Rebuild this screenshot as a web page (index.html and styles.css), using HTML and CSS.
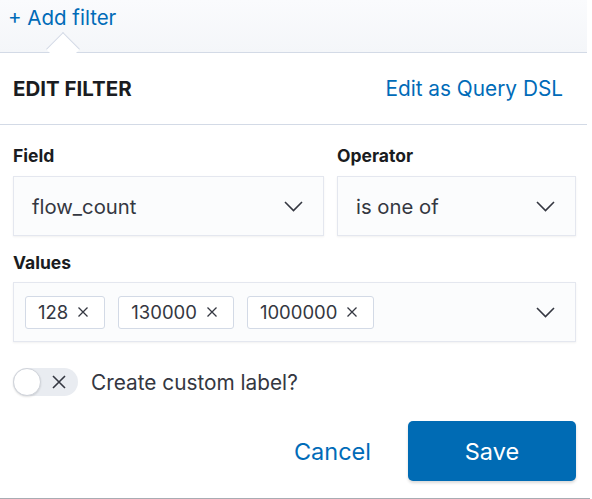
FILE: index.html
```html
<!DOCTYPE html>
<html>
<head>
<meta charset="utf-8">
<link rel="stylesheet" href="styles.css">
</head>
<body>
<div class="page">
  <div class="topbar">
    <a class="add-filter">+ Add filter</a>
    <span class="notch"></span>
  </div>
  <div class="panel">
    <div class="panel-head">
      <h2 class="title">EDIT FILTER</h2>
      <a class="link">Edit as Query DSL</a>
    </div>
    <div class="form">
      <div class="row">
        <div class="field">
          <label class="label">Field</label>
          <div class="select">
            <span>flow_count</span>
            <svg class="chev" width="19" height="11" viewBox="0 0 19 11"><path d="M1 1 L9.5 9.5 L18 1" fill="none" stroke="#343741" stroke-width="1.6"/></svg>
          </div>
        </div>
        <div class="field op">
          <label class="label">Operator</label>
          <div class="select">
            <span>is one of</span>
            <svg class="chev" width="19" height="11" viewBox="0 0 19 11"><path d="M1 1 L9.5 9.5 L18 1" fill="none" stroke="#343741" stroke-width="1.6"/></svg>
          </div>
        </div>
      </div>
      <label class="label values-label">Values</label>
      <div class="combo">
        <div class="chips">
          <span class="chip">128<svg width="12" height="12" viewBox="0 0 12 12"><path d="M1.5 1.5 L10.5 10.5 M10.5 1.5 L1.5 10.5" stroke="#343741" stroke-width="1.3"/></svg></span>
          <span class="chip">130000<svg width="12" height="12" viewBox="0 0 12 12"><path d="M1.5 1.5 L10.5 10.5 M10.5 1.5 L1.5 10.5" stroke="#343741" stroke-width="1.3"/></svg></span>
          <span class="chip">1000000<svg width="12" height="12" viewBox="0 0 12 12"><path d="M1.5 1.5 L10.5 10.5 M10.5 1.5 L1.5 10.5" stroke="#343741" stroke-width="1.3"/></svg></span>
        </div>
        <svg class="chev" width="19" height="11" viewBox="0 0 19 11"><path d="M1 1 L9.5 9.5 L18 1" fill="none" stroke="#343741" stroke-width="1.6"/></svg>
      </div>
      <div class="toggle-row">
        <span class="switch">
          <span class="knob"></span>
          <svg class="switch-x" width="16" height="16" viewBox="0 0 16 16"><path d="M2 2 L14 14 M14 2 L2 14" stroke="#343741" stroke-width="1.6"/></svg>
        </span>
        <span class="toggle-label">Create custom label?</span>
      </div>
      <div class="actions">
        <a class="cancel">Cancel</a>
        <button class="save">Save</button>
      </div>
    </div>
  </div>
  <div class="bottom-line"></div>
</div>
</body>
</html>
```

FILE: styles.css
```css
* { box-sizing: border-box; }
html, body { margin: 0; padding: 0; background: #fff; }
body {
  font-family: Inter, "Noto Sans", sans-serif;
  color: #343741;
  width: 592px;
  height: 499px;
  overflow: hidden;
}
.page { width: 590px; }
.topbar {
  position: relative;
  width: 587px;
  height: 53px;
  background: linear-gradient(#fafbfd, #f4f6f9);
  border-bottom: 1px solid #d3dae6;
  padding: 5px 0 0 8px;
}
.add-filter {
  font-size: 20.5px;
  line-height: 26px;
  color: #006bb8;
}
.notch {
  position: absolute;
  left: 51px;
  bottom: -9px;
  width: 24px;
  height: 24px;
  background: #fff;
  border-left: 1px solid #d3dae6;
  border-top: 1px solid #d3dae6;
  transform: rotate(45deg);
}
.panel {
  position: relative;
  width: 587px;
  background: #fff;
}
.panel-head {
  height: 72px;
  display: flex;
  align-items: center;
  justify-content: space-between;
  padding: 0 24px 0 13px;
  border-bottom: 1px solid #d3dae6;
}
.title {
  margin: 0;
  font-size: 20.5px;
  font-weight: 700;
  color: #1a1c21;
}
.link {
  font-size: 20.8px;
  color: #006bb8;
}
.form {
  padding: 21px 11px 0 13px;
}
.row {
  display: grid;
  grid-template-columns: 311px 239px;
  gap: 13px;
}
.label {
  display: block;
  font-size: 17.5px;
  font-weight: 700;
  line-height: 20px;
  color: #1a1c21;
  margin-bottom: 10px;
}
.select {
  height: 60px;
  background: #fbfcfd;
  border: 1px solid #e4e7ef;
  box-shadow: 0 1px 2px rgba(0,0,0,0.06);
  display: flex;
  align-items: center;
  justify-content: space-between;
  padding: 0 20px 0 18px;
  font-size: 20.3px;
  color: #343741;
}
.values-label {
  margin-top: 17px;
  margin-bottom: 9px;
}
.combo {
  height: 60px;
  background: #fbfcfd;
  border: 1px solid #e4e7ef;
  box-shadow: 0 1px 2px rgba(0,0,0,0.06);
  display: flex;
  align-items: center;
  justify-content: space-between;
  padding: 0 20px 0 11px;
}
.chips {
  display: flex;
  gap: 13px;
}
.chip {
  height: 33px;
  display: inline-flex;
  align-items: center;
  gap: 9px;
  padding: 0 15px 0 12px;
  background: #fff;
  border: 1px solid #d3dae6;
  border-radius: 3px;
  font-size: 18.5px;
  color: #343741;
}
.toggle-row {
  margin-top: 25px;
  height: 30px;
  display: flex;
  align-items: center;
  gap: 13px;
}
.switch {
  position: relative;
  width: 65px;
  height: 28px;
  border-radius: 14px;
  background: #e9ecf1;
  display: inline-block;
}
.knob {
  position: absolute;
  left: 0;
  top: 0;
  width: 28px;
  height: 28px;
  border-radius: 50%;
  background: #fff;
  border: 1px solid #cfd3da;
  box-shadow: 0 1px 2px rgba(0,0,0,0.12);
}
.switch-x {
  position: absolute;
  left: 38px;
  top: 6px;
}
.toggle-label {
  font-size: 20.8px;
  color: #343741;
}
.actions {
  margin-top: 24px;
  display: flex;
  justify-content: flex-end;
  align-items: center;
  gap: 37px;
}
.cancel {
  font-size: 23.5px;
  color: #006bb8;
}
.save {
  width: 168px;
  height: 60px;
  border: none;
  border-radius: 5px;
  background: #006bb4;
  color: #fff;
  font-family: Inter, sans-serif;
  font-size: 23.5px;
  font-weight: 400;
  box-shadow: 0 2px 3px rgba(0,0,0,0.15);
}
.bottom-line {
  margin-top: 17px;
  height: 2px;
  width: 590px;
  background: #a8acb3;
}
```
